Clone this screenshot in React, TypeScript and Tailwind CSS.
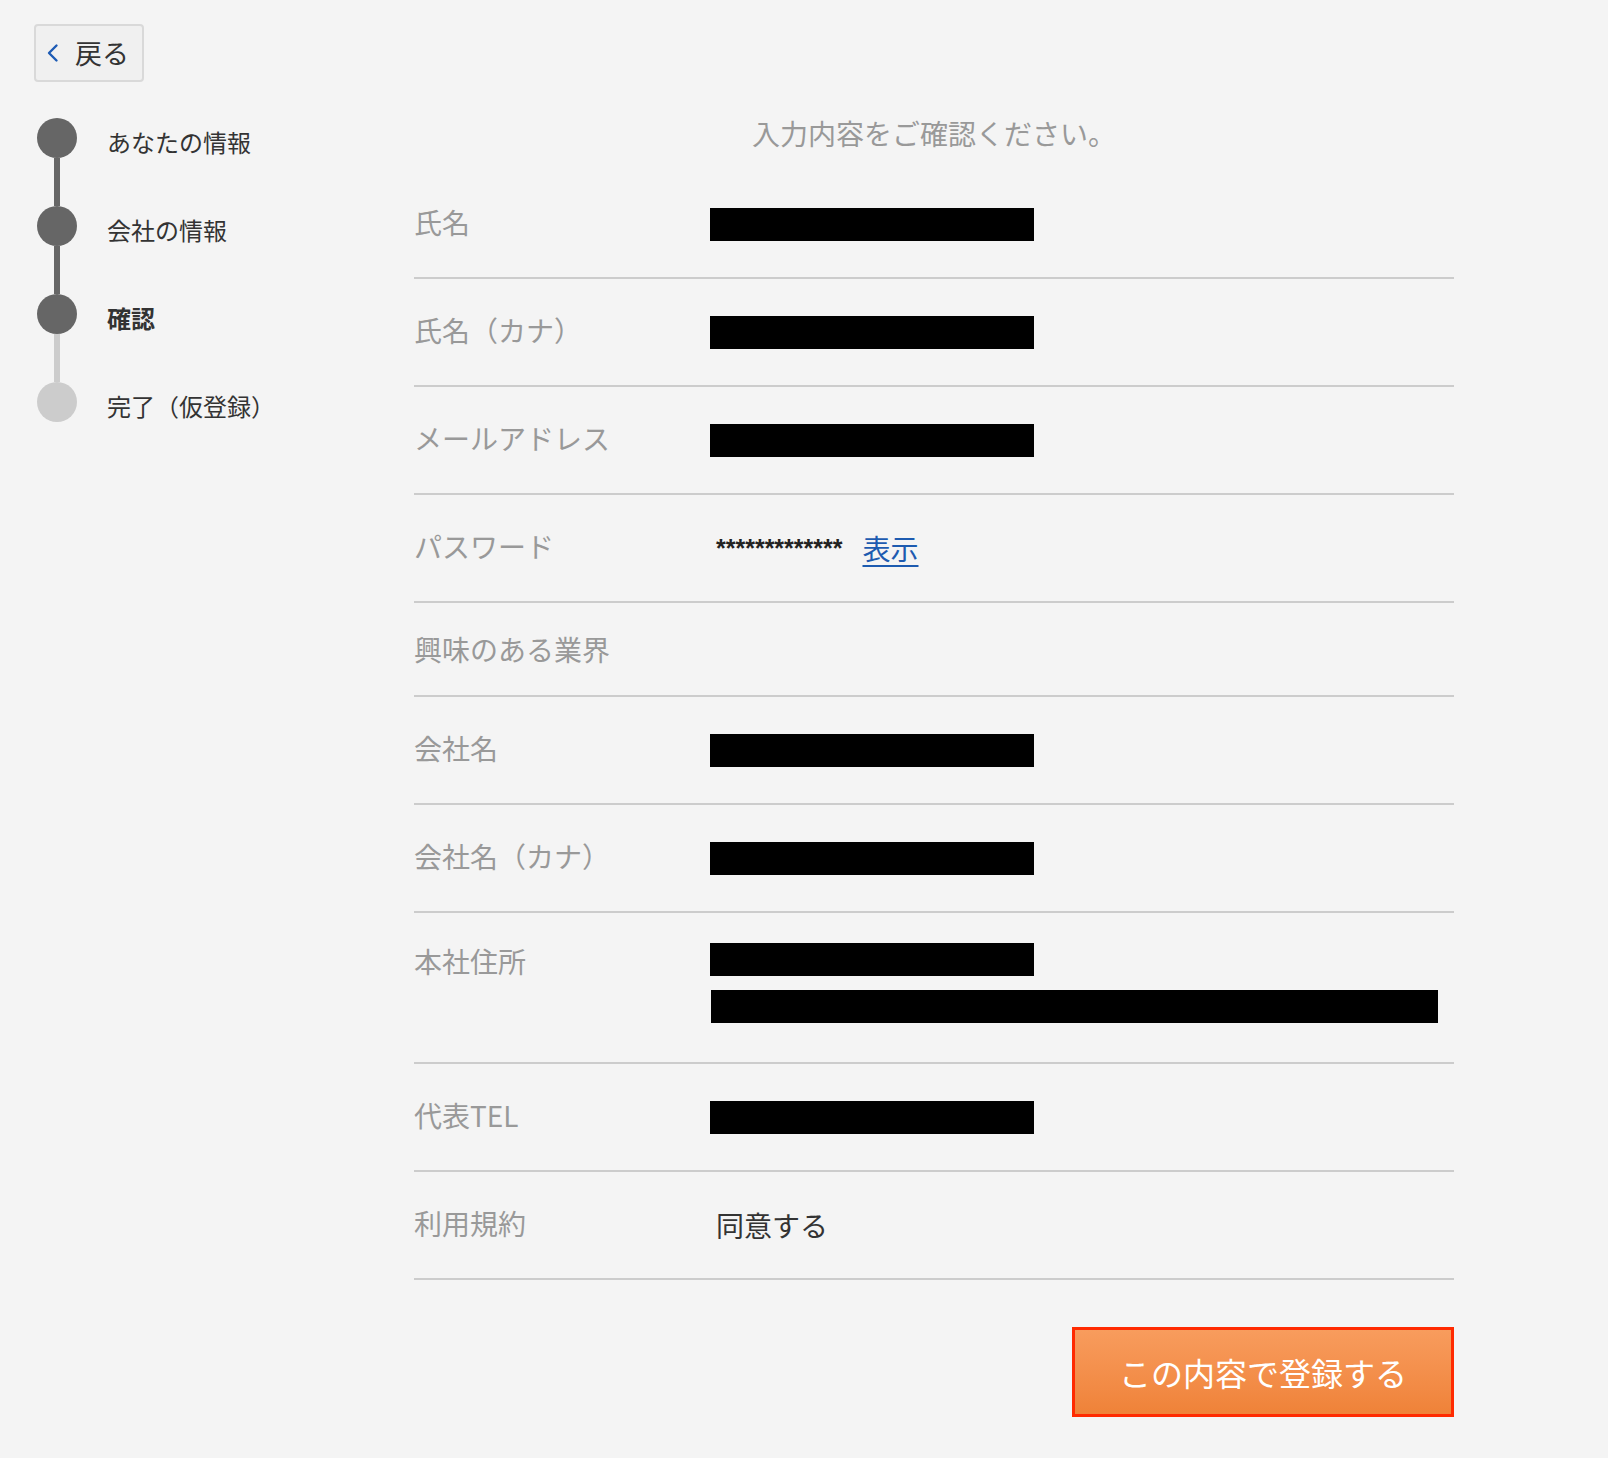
import React from "react";

type Row = {
  label: string;
  kind: "bar" | "address" | "password" | "empty" | "text";
  text?: string;
};

const ROWS: Row[] = [
  { label: "氏名", kind: "bar" },
  { label: "氏名（カナ）", kind: "bar" },
  { label: "メールアドレス", kind: "bar" },
  { label: "パスワード", kind: "password" },
  { label: "興味のある業界", kind: "empty" },
  { label: "会社名", kind: "bar" },
  { label: "会社名（カナ）", kind: "bar" },
  { label: "本社住所", kind: "address" },
  { label: "代表TEL", kind: "bar" },
  { label: "利用規約", kind: "text", text: "同意する" },
];

const STEPS = [
  { label: "あなたの情報", done: true },
  { label: "会社の情報", done: true },
  { label: "確認", done: true, current: true },
  { label: "完了（仮登録）", done: false },
];

const Steps = () => {
  return (
    <div className="w-[377px] shrink-0">
      {STEPS.map((step, i) => (
        <div key={step.label}>
          {i > 0 && (
            <div
              className={
                STEPS[i].done
                  ? "ml-[17px] h-[48px] w-[6px] bg-[#666666]"
                  : "ml-[17px] h-[48px] w-[6px] bg-[#cccccc]"
              }
            />
          )}
          <div className="flex h-[40px] items-center">
            <div
              className={
                step.done
                  ? "h-[40px] w-[40px] rounded-full bg-[#666666]"
                  : "h-[40px] w-[40px] rounded-full bg-[#cccccc]"
              }
            />
            <span
              className={
                step.current
                  ? "ml-[30px] mt-[8px] text-[24px] font-bold leading-[32px] text-[#333333]"
                  : "ml-[30px] mt-[8px] text-[24px] leading-[32px] text-[#333333]"
              }
            >
              {step.label}
            </span>
          </div>
        </div>
      ))}
    </div>
  );
};

const ConfirmRow = ({ row }: { row: Row }) => {
  if (row.kind === "empty") {
    return (
      <div className="flex border-b-2 border-[#cccccc] py-[30px]">
        <div className="w-[296px] text-[28px] leading-[32px] text-[#999999]">{row.label}</div>
      </div>
    );
  }

  if (row.kind === "address") {
    return (
      <div className="flex border-b-2 border-[#cccccc] pt-[30px] pb-[39px]">
        <div className="w-[296px] text-[28px] leading-[37px] text-[#999999]">{row.label}</div>
        <div className="flex flex-col gap-[14px]">
          <div className="h-[33px] w-[324px] bg-black" />
          <div className="ml-[1px] h-[33px] w-[727px] bg-black" />
        </div>
      </div>
    );
  }

  return (
    <div className="flex border-b-2 border-[#cccccc] py-[30px]">
      <div className="w-[296px] text-[28px] leading-[43px] text-[#999999]">{row.label}</div>
      <div className="flex h-[46px] items-center">
        {row.kind === "bar" && <div className="h-[33px] w-[324px] bg-black" />}
        {row.kind === "password" && (
          <>
            <span className="pl-[6px] font-['Liberation_Sans',sans-serif] text-[25px] font-bold leading-[46px] text-[#222222]">
              *************
            </span>
            <a href="#" className="ml-[20px] text-[28px] leading-[46px] text-[#1d5bb0] underline underline-offset-[5px]">
              表示
            </a>
          </>
        )}
        {row.kind === "text" && (
          <span className="pl-[6px] text-[28px] leading-[44px] text-[#333333]">{row.text}</span>
        )}
      </div>
    </div>
  );
};

export default function App() {
  return (
    <div className="min-h-screen bg-[#f4f4f4] pb-[40px] font-['Noto_Sans_CJK_JP',sans-serif] text-[#333333]">
      <div className="pl-[34px] pt-[24px]">
        <button className="flex h-[58px] w-[110px] items-center rounded-[4px] border-2 border-[#d9d9d9] bg-[#f0f0f0] pl-[10px]">
          <svg width="13" height="20" viewBox="0 0 13 20" fill="none">
            <path d="M10.5 2.5 L3 10 L10.5 17.5" stroke="#1d5bb5" strokeWidth="2.4" strokeLinecap="round" strokeLinejoin="round" />
          </svg>
          <span className="ml-[16px] text-[27px] leading-[40px] text-[#333333]">戻る</span>
        </button>
      </div>

      <div className="flex pl-[37px] pt-[36px]">
        <Steps />

        <div className="w-[1040px]">
          <h1 className="text-center text-[28px] leading-[30px] text-[#999999]">入力内容をご確認ください。</h1>

          <div className="mt-[23px]">
            {ROWS.map((row) => (
              <ConfirmRow key={row.label} row={row} />
            ))}
          </div>

          <div className="mt-[47px] flex justify-end">
            <button className="h-[90px] w-[382px] border-[3px] border-[#ff2a00] bg-linear-to-b from-[#f89c5d] to-[#ef8238] text-[32px] text-white">
              この内容で登録する
            </button>
          </div>
        </div>
      </div>
    </div>
  );
}
